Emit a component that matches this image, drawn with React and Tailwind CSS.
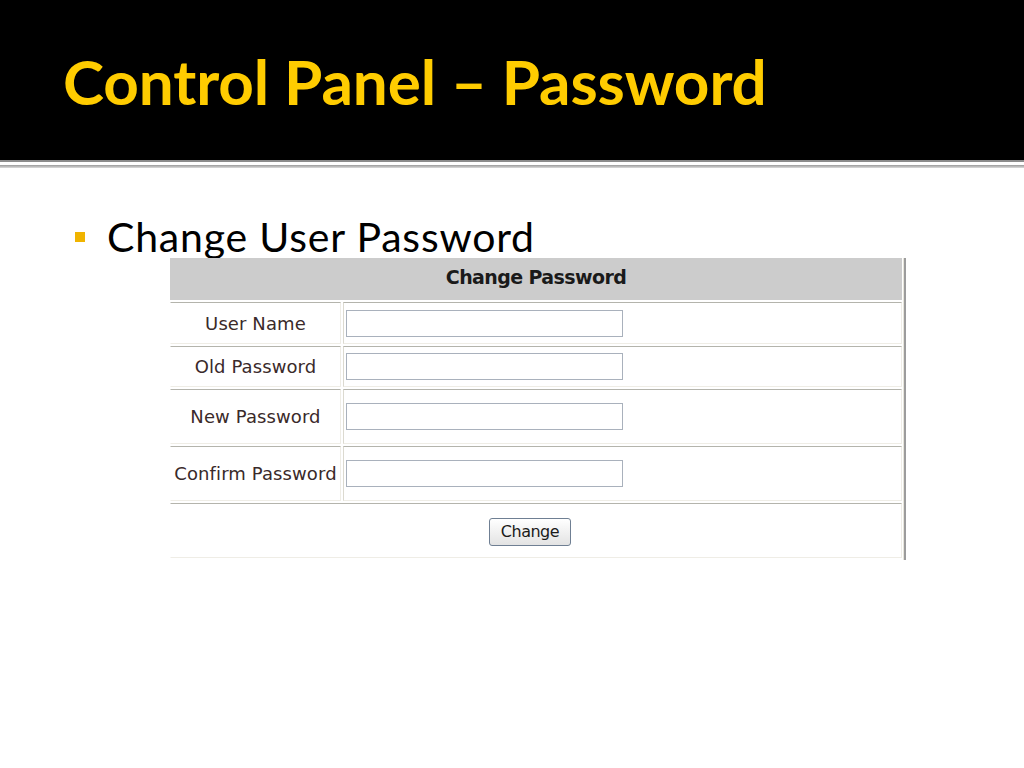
import React from 'react';

const rows = [
  { label: 'User Name', h: 'h-[42px]' },
  { label: 'Old Password', h: 'h-[41px]' },
  { label: 'New Password', h: 'h-[55px]' },
  { label: 'Confirm Password', h: 'h-[55px]' },
];

const cell = 'border border-[#efede6] border-t-[#b4b4ac]';

const FormRow = ({ label, h }) => (
  <div className={`flex gap-[2px] ${h}`}>
    <div className={`${cell} border-l-white w-[171px] flex items-center justify-center text-[#3a2a2a]`}>
      {label}
    </div>
    <div className={`${cell} border-l-[#dcdad0] flex-1 flex items-center pl-[2px]`}>
      <input
        type="text"
        className="w-[277px] h-[27px] border border-[#a9b1bc] bg-white outline-none"
      />
    </div>
  </div>
);

export default function App() {
  return (
    <div className="w-[1024px] h-[768px] bg-white overflow-hidden">
      {/* slide title bar */}
      <div className="h-[160px] bg-black pl-[63px] pt-[50px]">
        <h1 className="font-['Lato',sans-serif] font-bold text-[62px] leading-none text-[#ffcc00] tracking-[-0.1px]">
          Control Panel – Password
        </h1>
      </div>
      <div className="h-[2px] bg-[#8c8c8c]"></div>
      <div className="h-[3px] bg-white"></div>
      <div className="h-[3px] bg-gradient-to-b from-[#9a9a9a] to-[#dcdcdc]"></div>

      {/* bullet */}
      <div className="flex items-center pl-[75px] pt-[46px] h-[90px]">
        <div className="w-[10px] h-[10px] bg-[#f0b400] mr-[22px] mt-[2px]"></div>
        <span className="font-['Lato',sans-serif] text-[41px] leading-none text-black tracking-[0.8px]">
          Change User Password
        </span>
      </div>

      {/* form table */}
      <div className="ml-[170px] w-[736px] flex">
        <div className="flex-1 flex flex-col gap-[2px] font-['DejaVu_Sans',sans-serif] text-[18px] tracking-[0.1px]">
          <div className="h-[42px] bg-[#cccccc] flex items-center justify-center font-bold text-[19px] text-[#1a1a1a] tracking-[-0.6px] pb-[4px]">
            Change Password
          </div>
          {rows.map((r) => (
            <FormRow key={r.label} {...r} />
          ))}
          <div className={`${cell} border-l-white h-[55px] flex items-center justify-center`}>
            <button className="mr-[12px] mt-[2px] w-[82px] h-[28px] rounded-[3px] border border-[#6f7f93] bg-gradient-to-b from-white to-[#e3e3e3] text-[16px] text-[#1a1a1a] font-['DejaVu_Sans',sans-serif] tracking-[-0.5px]">
              Change
            </button>
          </div>
        </div>
        <div className="w-[3px] ml-[1px] border-l border-[#e8e6dc] border-r-2 border-r-[#9c9c9c] h-[302px]"></div>
      </div>
    </div>
  );
}
